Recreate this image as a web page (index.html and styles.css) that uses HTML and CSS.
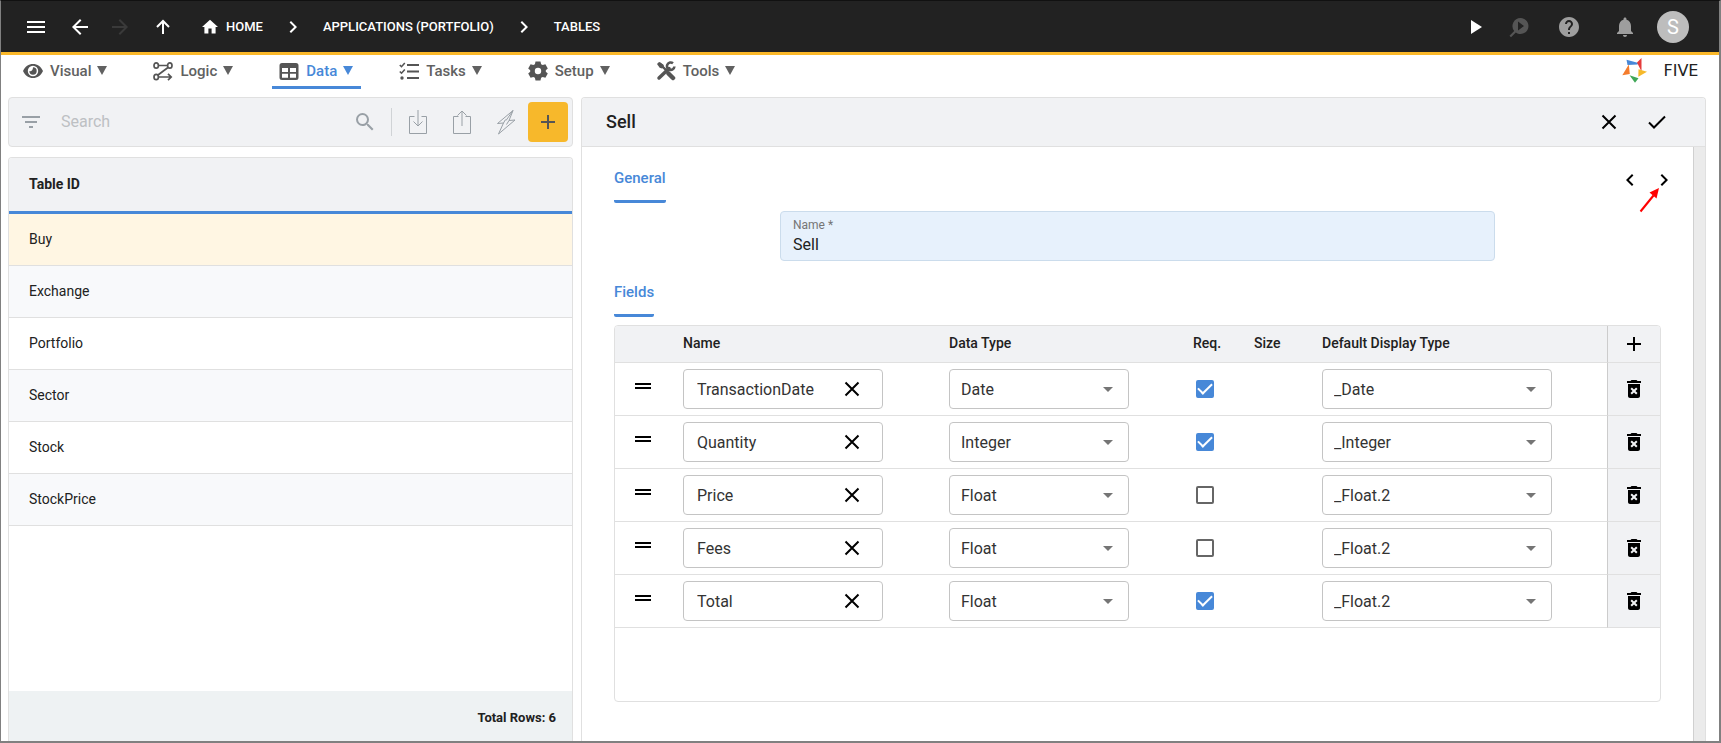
FILE: index.html
```html
<!DOCTYPE html>
<html lang="en">
<head>
<meta charset="utf-8">
<title>Five - Tables</title>
<link rel="stylesheet" href="styles.css">
</head>
<body>
<svg class="sprite" aria-hidden="true">
  <symbol id="close" viewBox="0 0 24 24"><path d="M5.500 5.500 18.500 18.500M18.500 5.500 5.500 18.500" fill="none" stroke="currentColor" stroke-width="2"/></symbol>
  <symbol id="chev-right" viewBox="0 0 24 24"><path d="M10 6 8.590 7.410 13.170 12l-4.580 4.590L10 18l6-6z"/></symbol>
  <symbol id="chev-left" viewBox="0 0 24 24"><path d="M15.410 7.410 14 6l-6 6 6 6 1.410-1.410L10.830 12z"/></symbol>
  <symbol id="plus" viewBox="0 0 24 24"><path d="M19 13h-6v6h-2v-6H5v-2h6V5h2v6h6z"/></symbol>
  <symbol id="drag" viewBox="0 0 24 24"><path d="M4 9h16v2H4zM4 13h16v2H4z"/></symbol>
  <symbol id="bin" viewBox="0 0 24 24"><path fill-rule="evenodd" d="M6 19c0 1.100.9 2 2 2h8c1.100 0 2-.9 2-2V7H6zm2.460-7.120 1.410-1.410L12 12.590l2.120-2.120 1.410 1.410L13.410 14l2.120 2.120-1.410 1.410L12 15.410l-2.120 2.120-1.410-1.410L10.590 14zM15.500 4l-1-1h-5l-1 1H5v2h14V4z"/></symbol>
</svg>

<header class="topbar">
  <button class="icon-btn menu" aria-label="Menu"><svg viewBox="0 0 24 24"><path d="M3 6h18v2H3zM3 11h18v2H3zM3 16h18v2H3z"/></svg></button>
  <button class="icon-btn back" aria-label="Back"><svg viewBox="0 0 24 24"><path d="M20 11H7.830l5.590-5.590L12 4l-8 8 8 8 1.410-1.410L7.830 13H20z"/></svg></button>
  <button class="icon-btn forward" aria-label="Forward" disabled><svg viewBox="0 0 24 24"><path d="m12 4-1.410 1.410L16.170 11H4v2h12.170l-5.580 5.590L12 20l8-8z"/></svg></button>
  <button class="icon-btn up" aria-label="Up"><svg viewBox="0 0 24 24"><path d="M12 19V6M6 12l6-6 6 6" fill="none" stroke="currentColor" stroke-width="2"/></svg></button>
  <nav class="crumbs" aria-label="Breadcrumb">
    <a href="#" class="home"><svg viewBox="0 0 20 20"><path d="M8 18v-6h4v6h5v-8h3L10 1 0 10h3v8z"/></svg>HOME</a>
    <svg class="sep"><use href="#chev-right"/></svg>
    <a href="#">APPLICATIONS (PORTFOLIO)</a>
    <svg class="sep"><use href="#chev-right"/></svg>
    <a href="#">TABLES</a>
  </nav>
  <div class="top-actions">
    <button class="icon-btn" aria-label="Run"><svg viewBox="0 0 24 24"><path d="M7 5v14l11-7z"/></svg></button>
    <button class="icon-btn inspect" aria-label="Inspect" disabled><svg viewBox="0 0 24 24"><path fill-rule="evenodd" d="M13.500 3a8 8 0 1 1-4.700 14.500L4 22.300 2.500 20.800l4.700-4.900A8 8 0 0 1 13.500 3zM11 6.500v9l6-4.500z"/></svg></button>
    <button class="icon-btn help" aria-label="Help"><svg viewBox="0 0 24 24"><path d="M12 2C6.480 2 2 6.480 2 12s4.480 10 10 10 10-4.480 10-10S17.520 2 12 2zm1 17h-2v-2h2zm2.070-7.750-.9.920C13.450 12.900 13 13.500 13 15h-2v-.5c0-1.100.45-2.100 1.170-2.830l1.240-1.260c.37-.36.590-.86.590-1.410 0-1.100-.9-2-2-2s-2 .9-2 2H8c0-2.210 1.790-4 4-4s4 1.790 4 4c0 .88-.36 1.680-.93 2.250z"/></svg></button>
    <button class="icon-btn bell" aria-label="Notifications"><svg viewBox="0 0 24 24"><path d="M12 22c1.100 0 2-.9 2-2h-4c0 1.100.89 2 2 2zm6-6v-5c0-3.070-1.640-5.640-4.500-6.320V4c0-.83-.67-1.500-1.500-1.500s-1.500.67-1.500 1.500v.68C7.630 5.360 6 7.920 6 11v5l-2 2v1h16v-1z"/></svg></button>
    <button class="avatar" aria-label="Account">S</button>
  </div>
</header>

<nav class="modules" aria-label="Modules">
  <button class="module"><svg viewBox="0 0 20 20"><path fill-rule="evenodd" d="M0 10C2 5.500 5.700 3 10 3s8 2.500 10 7c-2 4.500-5.700 7-10 7S2 14.500 0 10zm10-5.200a5.200 5.200 0 1 0 0 10.400 5.200 5.200 0 0 0 0-10.400z"/><path d="M10 6.300a3.700 3.700 0 1 1-3.700 3.700c1.400 1 3.700-.5 3.700-3.700z"/></svg>Visual<span class="caret"></span></button>
  <button class="module"><svg viewBox="0 0 20 20" fill="none" stroke="currentColor" stroke-width="1.700"><ellipse cx="3.200" cy="4.500" rx="2.200" ry="2.700"/><ellipse cx="16.800" cy="4.500" rx="2.200" ry="2.700"/><ellipse cx="3.200" cy="16" rx="2.200" ry="2.700"/><path d="M5.500 4.500h9M15 6.500 5 14M5.500 16H18M15 12.800l3.200 3.200-3.200 3.200"/></svg>Logic<span class="caret"></span></button>
  <button class="module active"><svg viewBox="0 0 20 20"><path fill-rule="evenodd" d="M3 2h14a2.500 2.500 0 0 1 2.500 2.500v12A2.500 2.500 0 0 1 17 19H3a2.500 2.500 0 0 1-2.500-2.500v-12A2.500 2.500 0 0 1 3 2zM3 7v4h6V7zm8 0v4h6V7zm-8 5.700v4h6v-4zm8 0v4h6v-4z"/></svg>Data<span class="caret"></span></button>
  <button class="module"><svg viewBox="0 0 20 20" fill="none" stroke="currentColor" stroke-width="2"><path d="M8 4h12M8 10.500h12M8 17h12"/><path d="m.8 4 1.700 1.700L5.800 2M.8 10.500l1.700 1.700 3.300-3.700" stroke-width="1.600"/><circle cx="3" cy="17" r="1.700" fill="currentColor" stroke="none"/></svg>Tasks<span class="caret"></span></button>
  <button class="module"><svg viewBox="0 0 20 20"><path fill-rule="evenodd" d="M7.500.5h5l.6 2.700 1.600.9 2.700-.8 2.400 4.200-2 1.800v1.400l2 1.800-2.400 4.200-2.700-.8-1.600.9-.6 2.700h-5l-.6-2.700-1.600-.9-2.700.8-2.400-4.200 2-1.800V9.300l-2-1.800 2.400-4.200 2.700.8 1.600-.9zM10 6.800a3.200 3.200 0 1 0 0 6.400 3.200 3.200 0 0 0 0-6.400z"/></svg>Setup<span class="caret"></span></button>
  <button class="module"><svg viewBox="0 0 20 20" fill="none" stroke="currentColor"><path d="m3 2 3.500 2.500L7 6l4 4" stroke-width="2.400"/><path d="M1 3 3 1l4 2.800.5 2.200L6 7.500l-2.300-.7z" fill="currentColor" stroke="none"/><path d="m12.500 12.500 4.500 4.500" stroke-width="4.500" stroke-linecap="round"/><path d="m3 17 10-9.500" stroke-width="3.500" stroke-linecap="round"/><path d="M17 2.300A3.700 3.700 0 1 0 18.400 5.500" stroke-width="2.600"/></svg>Tools<span class="caret"></span></button>
  <a class="brand" href="#"><svg viewBox="0 0 26 26"><path fill="#4788d8" d="m4.500 1.800 12 3.200-1 1.500-10 .5z"/><path fill="#e53b3b" d="M19.500 0v13.500L15 4.500z"/><path fill="#f6b92b" d="m16.500 11.300 8.500 2.500-8.700 5z"/><path fill="#3fa757" d="m7.500 17.300 9 3-3.500 4.500z"/><path fill="#f47c2c" d="m6.800 6.500 1 9.500L.3 17.200z"/></svg><span>FIVE</span></a>
</nav>

<main class="workspace">
  <section class="list-pane">
    <div class="search-bar">
      <button class="icon-btn" aria-label="Filter"><svg viewBox="0 0 24 24"><path d="M3 6h18v2H3zM6 11h12v2H6zM10 16h4v2h-4z"/></svg></button>
      <input type="search" placeholder="Search" aria-label="Search">
      <button class="icon-btn" aria-label="Run search"><svg viewBox="0 0 24 24"><path d="M15.500 14h-.79l-.28-.27A6.470 6.470 0 0 0 16 9.500 6.500 6.500 0 1 0 9.500 16c1.610 0 3.090-.59 4.230-1.570l.27.28v.79l5 4.990L20.490 19zm-6 0C7.010 14 5 11.990 5 9.500S7.010 5 9.500 5 14 7.010 14 9.500 11.990 14 9.500 14z"/></svg></button>
      <span class="divider"></span>
      <button class="tool-btn" aria-label="Import"><svg viewBox="0 0 20 26" fill="none" stroke="currentColor"><path d="M6.500 7.500h-5v17h17v-17h-5M10 1v16M5.500 12.500 10 17l4.500-4.500"/></svg></button>
      <button class="tool-btn" aria-label="Export"><svg viewBox="0 0 20 26" fill="none" stroke="currentColor"><path d="M6.500 7.500h-5v17h17v-17h-5M10 17V2M5.500 6.500 10 2l4.500 4.500"/></svg></button>
      <button class="tool-btn" aria-label="Actions"><svg viewBox="0 0 20 26" fill="none" stroke="currentColor"><path d="M17 1.500 1.500 14.500l6-.5L2.500 25 19 11l-6 .5zM17 1.500l-7 10M13 11.500l-2.500 4M7.500 14l2-3.500"/></svg></button>
      <button class="add-btn" aria-label="Add"><svg><use href="#plus"/></svg></button>
    </div>
    <div class="list-card">
      <table class="list">
        <thead><tr><th>Table ID</th></tr></thead>
        <tbody>
          <tr class="selected"><td>Buy</td></tr>
          <tr><td>Exchange</td></tr>
          <tr><td>Portfolio</td></tr>
          <tr><td>Sector</td></tr>
          <tr><td>Stock</td></tr>
          <tr><td>StockPrice</td></tr>
        </tbody>
      </table>
      <div class="list-footer">Total Rows: 6</div>
    </div>
  </section>

  <section class="detail">
    <div class="detail-head">
      <h1>Sell</h1>
      <button class="icon-btn" aria-label="Cancel"><svg><use href="#close"/></svg></button>
      <button class="icon-btn" aria-label="Save"><svg viewBox="0 0 24 24"><path d="m4 12.500 5 5L20 6.500" fill="none" stroke="currentColor" stroke-width="2"/></svg></button>
    </div>
    <div class="detail-body">
      <div class="form">
        <div class="tab-row">
          <h2 class="tab">General</h2>
          <div class="pager">
            <button class="icon-btn" aria-label="Previous"><svg><use href="#chev-left"/></svg></button>
            <button class="icon-btn" aria-label="Next"><svg><use href="#chev-right"/></svg></button>
            <svg class="pointer" viewBox="0 0 22 26"><path d="m1.500 24.500 13-16" stroke="#f00" stroke-width="2"/><path fill="#f00" d="m20 1-2.500 10.500-7-6z"/></svg>
          </div>
        </div>
        <div class="name-field">
          <label for="name">Name *</label>
          <input id="name" type="text" value="Sell">
        </div>
        <div class="tab-row"><h2 class="tab">Fields</h2></div>
        <div class="grid-card">
          <table class="fields">
            <colgroup><col class="c-drag"><col class="c-name"><col class="c-type"><col class="c-req"><col class="c-size"><col><col class="c-act"></colgroup>
            <thead><tr><th></th><th>Name</th><th>Data Type</th><th>Req.</th><th>Size</th><th>Default Display Type</th><th class="act"><button class="icon-btn" aria-label="Add field"><svg><use href="#plus"/></svg></button></th></tr></thead>
            <tbody>
              <tr><td class="drag"><svg><use href="#drag"/></svg></td><td><div class="text-box"><input type="text" value="TransactionDate" aria-label="Name"><button class="icon-btn" aria-label="Clear"><svg><use href="#close"/></svg></button></div></td><td><div class="pick type"><select aria-label="Data Type"><option>Date</option></select></div></td><td class="req"><input type="checkbox" aria-label="Required" checked></td><td></td><td><div class="pick display"><select aria-label="Default Display Type"><option>_Date</option></select></div></td><td class="act"><button class="icon-btn" aria-label="Delete"><svg><use href="#bin"/></svg></button></td></tr>
              <tr><td class="drag"><svg><use href="#drag"/></svg></td><td><div class="text-box"><input type="text" value="Quantity" aria-label="Name"><button class="icon-btn" aria-label="Clear"><svg><use href="#close"/></svg></button></div></td><td><div class="pick type"><select aria-label="Data Type"><option>Integer</option></select></div></td><td class="req"><input type="checkbox" aria-label="Required" checked></td><td></td><td><div class="pick display"><select aria-label="Default Display Type"><option>_Integer</option></select></div></td><td class="act"><button class="icon-btn" aria-label="Delete"><svg><use href="#bin"/></svg></button></td></tr>
              <tr><td class="drag"><svg><use href="#drag"/></svg></td><td><div class="text-box"><input type="text" value="Price" aria-label="Name"><button class="icon-btn" aria-label="Clear"><svg><use href="#close"/></svg></button></div></td><td><div class="pick type"><select aria-label="Data Type"><option>Float</option></select></div></td><td class="req"><input type="checkbox" aria-label="Required"></td><td></td><td><div class="pick display"><select aria-label="Default Display Type"><option>_Float.2</option></select></div></td><td class="act"><button class="icon-btn" aria-label="Delete"><svg><use href="#bin"/></svg></button></td></tr>
              <tr><td class="drag"><svg><use href="#drag"/></svg></td><td><div class="text-box"><input type="text" value="Fees" aria-label="Name"><button class="icon-btn" aria-label="Clear"><svg><use href="#close"/></svg></button></div></td><td><div class="pick type"><select aria-label="Data Type"><option>Float</option></select></div></td><td class="req"><input type="checkbox" aria-label="Required"></td><td></td><td><div class="pick display"><select aria-label="Default Display Type"><option>_Float.2</option></select></div></td><td class="act"><button class="icon-btn" aria-label="Delete"><svg><use href="#bin"/></svg></button></td></tr>
              <tr><td class="drag"><svg><use href="#drag"/></svg></td><td><div class="text-box"><input type="text" value="Total" aria-label="Name"><button class="icon-btn" aria-label="Clear"><svg><use href="#close"/></svg></button></div></td><td><div class="pick type"><select aria-label="Data Type"><option>Float</option></select></div></td><td class="req"><input type="checkbox" aria-label="Required" checked></td><td></td><td><div class="pick display"><select aria-label="Default Display Type"><option>_Float.2</option></select></div></td><td class="act"><button class="icon-btn" aria-label="Delete"><svg><use href="#bin"/></svg></button></td></tr>
            </tbody>
          </table>
        </div>
      </div>
      <div class="scroll-track"></div>
    </div>
  </section>
</main>
</body>
</html>
```
FILE: styles.css
```css
* { box-sizing: border-box; }

body {
  margin: 0;
  height: 100vh;
  display: flex;
  flex-direction: column;
  overflow: hidden;
  border: 1px solid #808080;
  border-width: 1px 2px 2px 1px;
  border-top-color: #111;
  background: #fff;
  color: #212121;
  font-family: Roboto, "Liberation Sans", sans-serif;
  font-size: 14px;
  line-height: 20px;
}

.sprite { display: none; }
svg { flex: none; }
svg:not([fill]) { fill: currentColor; }
button, input, select { font: inherit; color: inherit; }
button { border: 0; padding: 0; background: none; cursor: pointer; }

.icon-btn { display: flex; flex: none; color: inherit; }
.icon-btn svg { width: 24px; height: 24px; }

/* Top bar */
.topbar {
  display: flex;
  align-items: center;
  height: 54px;
  flex: none;
  padding: 0 30px 0 23px;
  border-bottom: 3px solid #fbb829;
  background: #222;
  color: #fff;
}
.topbar .back { margin-left: 20px; }
.topbar .forward { margin-left: 16px; color: #3a3a3a; }
.topbar .up { margin-left: 19px; }
.crumbs {
  display: flex;
  align-items: center;
  margin-left: 27px;
  font-size: 13px;
  font-weight: 500;
}
.crumbs a { display: flex; align-items: center; color: inherit; text-decoration: none; }
.home svg { width: 16px; height: 18px; margin-right: 8px; }
.sep { width: 24px; height: 24px; margin: 0 18px; }
.top-actions { display: flex; align-items: center; margin-left: auto; }
.top-actions .inspect { margin-left: 19px; color: #555; }
.top-actions .help { margin-left: 26px; color: #9e9e9e; }
.top-actions .bell { margin-left: 32px; color: #9e9e9e; }
.avatar {
  width: 32px;
  height: 32px;
  margin-left: 20px;
  border-radius: 50%;
  background: #bdbdbd;
  color: #fff;
  font-size: 20px;
}

/* Module menu */
.modules {
  display: flex;
  align-items: flex-start;
  gap: 31px;
  height: 42px;
  flex: none;
  padding: 0 9px 0 15px;
}
.module {
  display: flex;
  align-items: center;
  height: 34px;
  padding: 0 8px 0 7px;
  border-bottom: 3px solid transparent;
  color: #616161;
  font-size: 15px;
  font-weight: 500;
}
.module svg { width: 20px; height: 20px; margin-right: 7px; color: #555; }
.module.active { border-color: #4788d8; color: #4788d8; }
.caret {
  margin-left: 6px;
  border: 5px solid transparent;
  border-top: 9px solid currentColor;
  border-bottom: 0;
}
.brand {
  display: flex;
  align-items: center;
  gap: 4px;
  margin: 3px 0 0 auto;
  color: #222;
  font-family: "DejaVu Sans", sans-serif;
  font-size: 16px;
  text-decoration: none;
}
.brand svg { width: 26px; height: 26px; }
.brand span { width: 58px; text-align: center; }

/* Workspace */
.workspace {
  flex: 1;
  min-height: 0;
  display: grid;
  grid-template-columns: minmax(0, 565fr) minmax(0, 1125fr);
  gap: 8px;
  padding: 0 13px 0 7px;
}
.list-pane { display: flex; flex-direction: column; gap: 10px; min-height: 0; }
.search-bar {
  display: flex;
  align-items: center;
  height: 50px;
  flex: none;
  padding: 0 4px 0 10px;
  border: 1px solid #e0e0e0;
  border-radius: 4px;
  background: #f1f2f4;
  color: #99a0a6;
}
.search-bar input {
  flex: 1;
  min-width: 0;
  margin-left: 18px;
  padding: 0;
  border: 0;
  outline: 0;
  background: none;
  font-size: 16px;
}
.search-bar input::placeholder { color: #bdc0c3; opacity: 1; }
.divider { width: 1px; height: 28px; margin: 0 16px 0 14px; background: #d0d3d6; }
.tool-btn { display: flex; margin-right: 24px; }
.tool-btn svg { width: 20px; height: 26px; }
.tool-btn + .add-btn { margin-left: -12px; }
.add-btn {
  display: flex;
  align-items: center;
  justify-content: center;
  width: 40px;
  height: 40px;
  flex: none;
  border-radius: 4px;
  background: #f7b82b;
  color: #555;
}
.add-btn svg { width: 24px; height: 24px; }

.list-card {
  flex: 1;
  display: flex;
  flex-direction: column;
  border: 1px solid #e0e0e0;
  border-bottom: 0;
  border-radius: 4px 4px 0 0;
  overflow: hidden;
}
.list { width: 100%; border-spacing: 0; text-align: left; }
.list th {
  height: 56px;
  padding: 0 20px 2px;
  border-bottom: 3px solid #4788d8;
  background: #f1f2f4;
  font-weight: 700;
}
.list td { height: 52px; padding: 0 20px 2px; border-bottom: 1px solid #e0e0e0; }
.list tr:nth-child(even) td { background: #f8f9fb; }
.list .selected td { background: #fff6e3; }
.list-footer {
  margin-top: auto;
  padding: 17px 16px 13px;
  background: #eef2f3;
  font-size: 13px;
  font-weight: 700;
  text-align: right;
}

/* Record details */
.detail {
  display: flex;
  flex-direction: column;
  min-height: 0;
  border: 1px solid #e0e0e0;
  border-bottom: 0;
  border-radius: 4px 4px 0 0;
  overflow: hidden;
}
.detail-head {
  display: flex;
  align-items: center;
  gap: 24px;
  height: 49px;
  flex: none;
  padding: 0 36px 0 24px;
  border-bottom: 1px solid #e0e0e0;
  background: #f1f2f4;
}
.detail-head h1 { flex: 1; margin: 0; font-size: 18px; font-weight: 500; }
.detail-head .icon-btn, .pager .icon-btn { color: #000; }
.detail-body { flex: 1; display: flex; min-height: 0; }
.form { flex: 1; min-width: 0; padding: 0 32px; }
.scroll-track { width: 12px; border-left: 1px solid #d0d0d0; background: #ebebeb; }
.tab-row {
  display: flex;
  align-items: flex-start;
  justify-content: space-between;
  height: 56px;
  margin-bottom: 8px;
}
.tab {
  height: 56px;
  margin: 0;
  padding-top: 21px;
  border-bottom: 3px solid #4788d8;
  border-radius: 2px;
  color: #4788d8;
  font-size: 15px;
  font-weight: 500;
}
.pager { position: relative; display: flex; gap: 10px; margin: 21px -15px 0 0; }
.pointer {
  position: absolute;
  left: 21px;
  top: 19px;
  width: 22px;
  height: 26px;
  pointer-events: none;
}
.name-field {
  display: flex;
  flex-direction: column;
  height: 50px;
  margin: 0 166px;
  padding: 4px 12px;
  border: 1px solid #cbdcec;
  border-radius: 4px;
  background: #e7f1fc;
}
.name-field label { color: #757575; font-size: 12px; line-height: 18px; }
.name-field input {
  padding: 1px 0 0;
  border: 0;
  outline: 0;
  background: none;
  font-size: 16px;
  line-height: 20px;
}

.grid-card {
  padding-bottom: 73px;
  border: 1px solid #e0e0e0;
  border-radius: 4px;
  overflow: hidden;
}
.fields { width: 100%; table-layout: fixed; border-spacing: 0; text-align: left; }
.c-drag { width: 68px; }
.c-name { width: 266px; }
.c-type { width: 244px; }
.c-req { width: 61px; }
.c-size { width: 68px; }
.c-act { width: 53px; }
.fields th {
  height: 37px;
  padding: 0 0 2px;
  border-bottom: 1px solid #e0e0e0;
  background: #f1f2f4;
  font-weight: 500;
}
.fields td { height: 53px; padding: 0; border-bottom: 1px solid #e0e0e0; }
.fields .act { padding: 0; border-left: 1px solid #ccc; background: #f1f2f4; color: #000; }
.act .icon-btn { margin: 0 auto; }
.drag svg { display: block; width: 24px; height: 24px; margin: 0 auto 6px 16px; color: #000; }
.req input {
  appearance: none;
  display: block;
  width: 18px;
  height: 18px;
  margin: 0 0 0 3px;
  border: 2px solid #666;
  border-radius: 2px;
}
.req input:checked {
  display: grid;
  place-items: center;
  border-color: #4788d8;
  background: #4788d8;
}
.req input:checked::after {
  content: "";
  width: 12px;
  height: 6px;
  border: 2px solid #fff;
  border-width: 0 0 2px 2px;
  transform: translateY(-2px) rotate(-45deg);
}
.text-box, .pick {
  display: flex;
  align-items: center;
  height: 40px;
  border: 1px solid #c4c4c4;
  border-radius: 4px;
  background: #fff;
  font-size: 16px;
  color: #333;
}
.text-box { width: 200px; padding: 0 18px 0 13px; }
.text-box input { flex: 1; min-width: 0; padding: 2px 0 0; border: 0; outline: 0; background: none; }
.text-box .icon-btn { color: #000; }
.type { width: 180px; }
.display { width: 230px; }
.pick::after {
  content: "";
  margin: 0 15px 0 -25px;
  border: 5px solid transparent;
  border-top-color: #757575;
  border-bottom: 0;
  pointer-events: none;
}
.pick select {
  appearance: none;
  width: 100%;
  height: 100%;
  padding: 2px 30px 0 11px;
  border: 0;
  outline: 0;
  background: none;
}
```
